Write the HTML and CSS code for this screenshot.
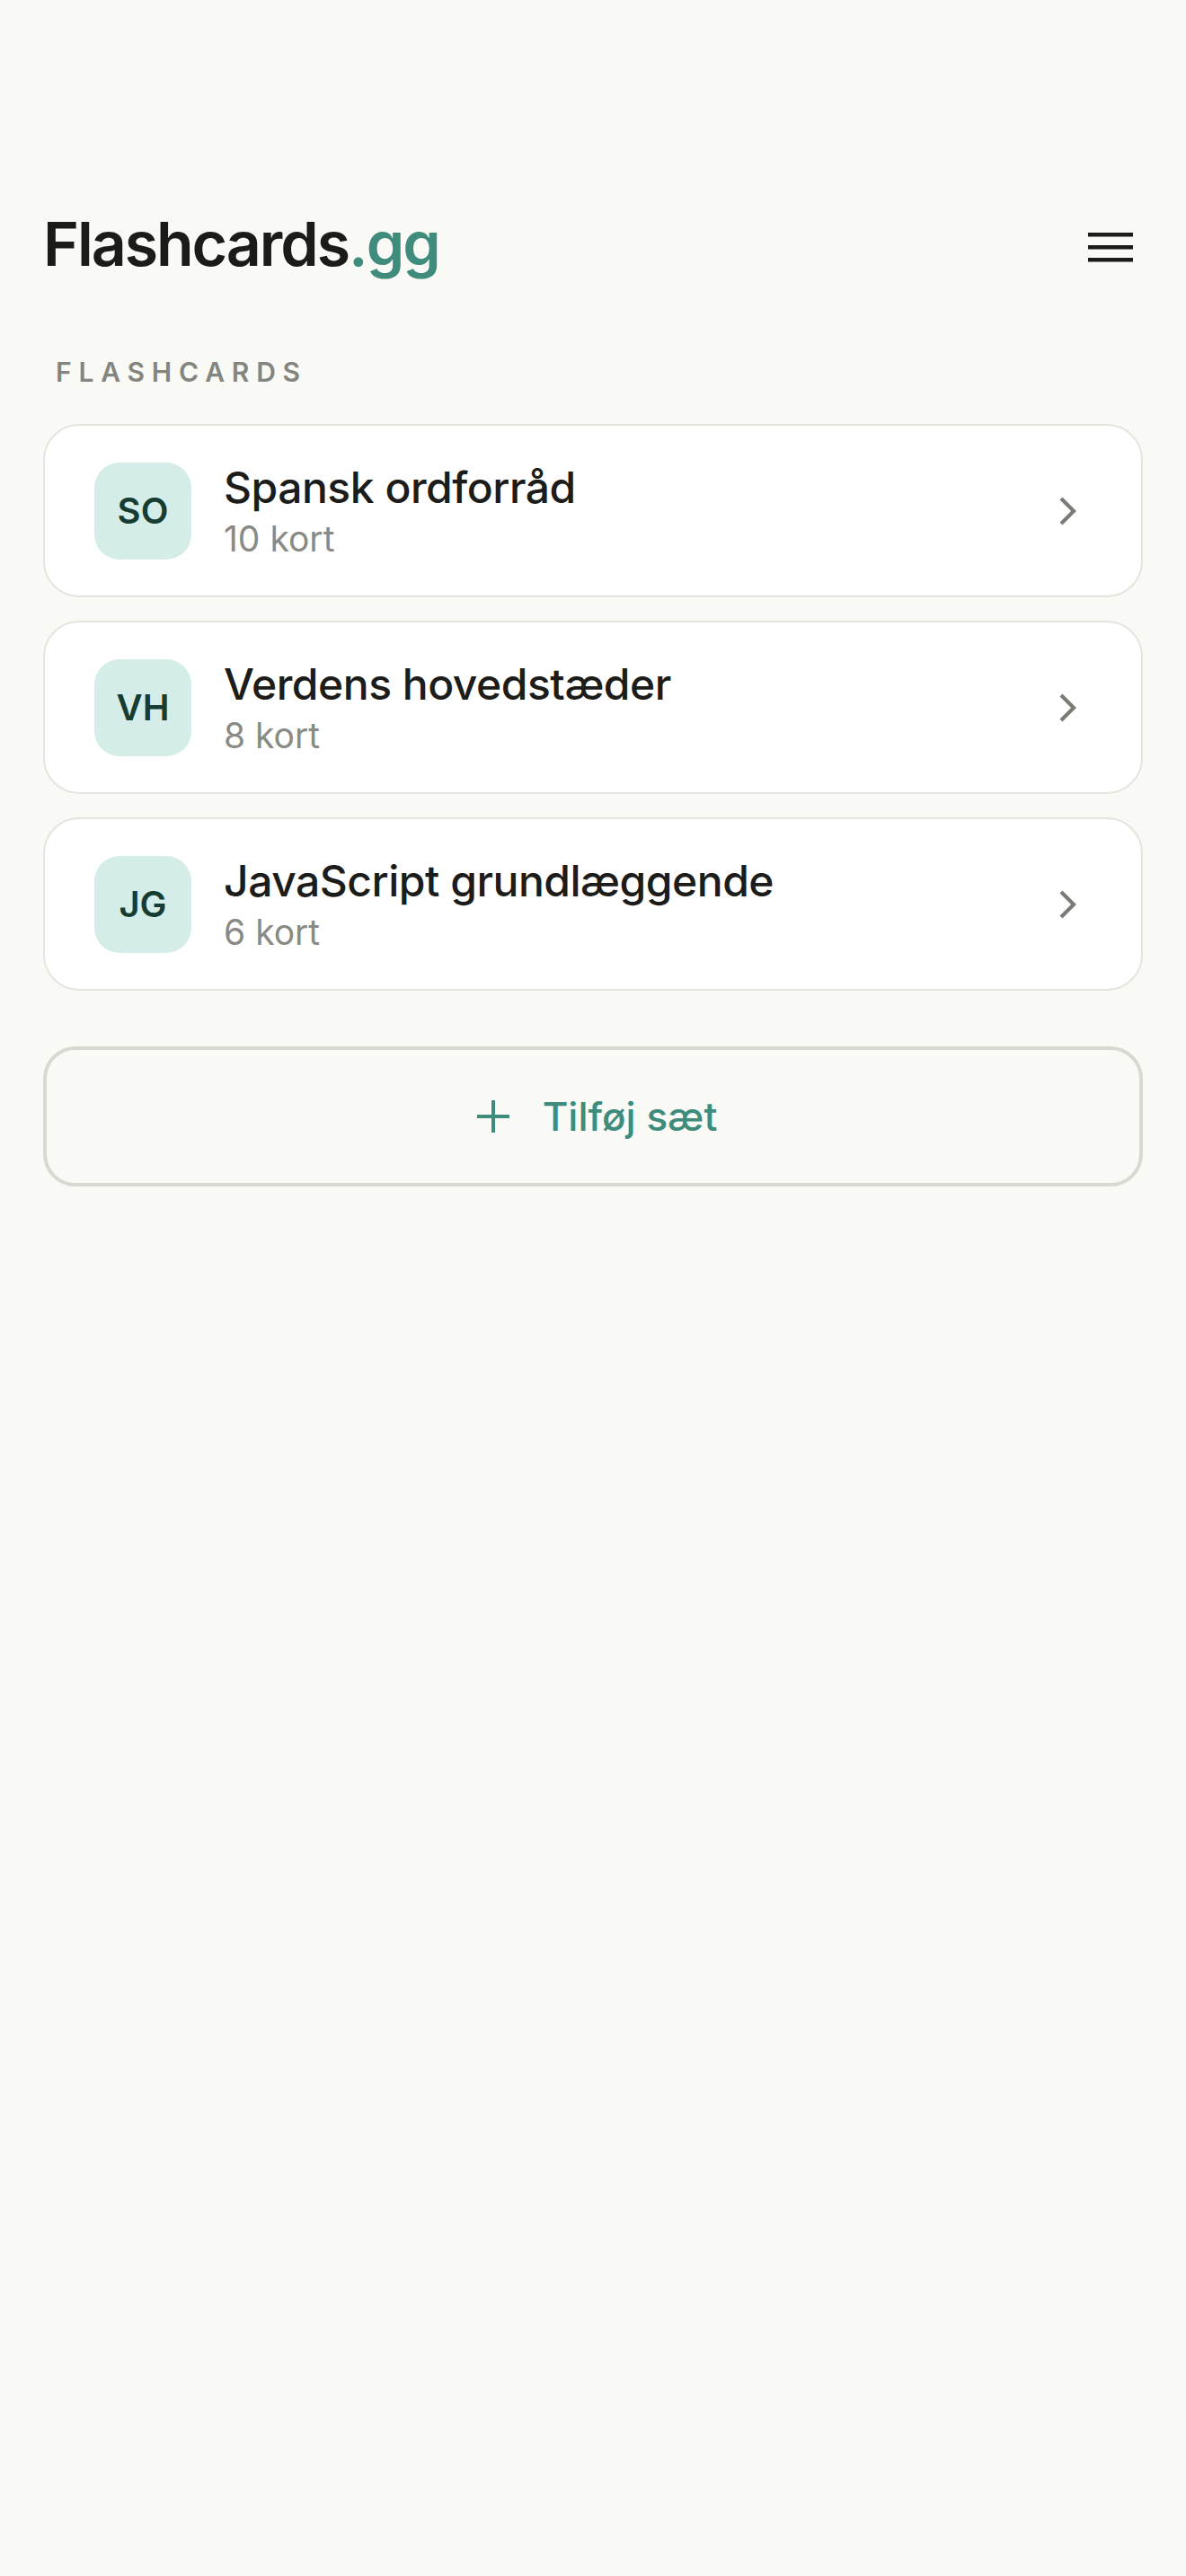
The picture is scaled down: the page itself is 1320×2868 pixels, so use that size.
FILE: index.html
```html
<!DOCTYPE html>
<html lang="da">
<head>
<meta charset="utf-8">
<title>Flashcards.gg</title>
<link rel="stylesheet" href="styles.css">
</head>
<body>
<div class="app">
  <header class="topbar">
    <h1 class="logo">Flashcards<span class="logo-accent">.gg</span></h1>
    <button class="menu-btn" aria-label="Menu">
      <svg width="50" height="34" viewBox="0 0 50 34"><rect x="0" y="1" width="50" height="4.5" fill="#1b1b19"/><rect x="0" y="15" width="50" height="4.5" fill="#1b1b19"/><rect x="0" y="29" width="50" height="4.5" fill="#1b1b19"/></svg>
    </button>
  </header>

  <div class="section-label">FLASHCARDS</div>

  <ul class="deck-list">
    <li class="deck">
      <div class="avatar">SO</div>
      <div class="deck-text">
        <div class="deck-title">Spansk ordforråd</div>
        <div class="deck-count">10 kort</div>
      </div>
      <svg class="chevron" width="22" height="34" viewBox="0 0 22 34"><polyline points="3,3 17,17 3,31" fill="none" stroke="#7b7b76" stroke-width="4.2"/></svg>
    </li>
    <li class="deck">
      <div class="avatar">VH</div>
      <div class="deck-text">
        <div class="deck-title">Verdens hovedstæder</div>
        <div class="deck-count">8 kort</div>
      </div>
      <svg class="chevron" width="22" height="34" viewBox="0 0 22 34"><polyline points="3,3 17,17 3,31" fill="none" stroke="#7b7b76" stroke-width="4.2"/></svg>
    </li>
    <li class="deck">
      <div class="avatar">JG</div>
      <div class="deck-text">
        <div class="deck-title">JavaScript grundlæggende</div>
        <div class="deck-count">6 kort</div>
      </div>
      <svg class="chevron" width="22" height="34" viewBox="0 0 22 34"><polyline points="3,3 17,17 3,31" fill="none" stroke="#7b7b76" stroke-width="4.2"/></svg>
    </li>
  </ul>

  <button class="add-btn">
    <svg width="38" height="38" viewBox="0 0 38 38"><path d="M19 1 V37 M1 19 H37" stroke="#3f8c7c" stroke-width="4" fill="none"/></svg>
    <span>Tilføj sæt</span>
  </button>
</div>
</body>
</html>
```

FILE: styles.css
```css
* { box-sizing: border-box; }

html, body {
  margin: 0;
  padding: 0;
  background: #f9f9f5;
}

body {
  font-family: Inter, "Noto Sans", "Liberation Sans", sans-serif;
  color: #1b1b19;
}

.app {
  padding: 230px 48px 0;
}

.topbar {
  display: flex;
  justify-content: space-between;
  align-items: flex-start;
  height: 82px;
}

.logo {
  margin: 0;
  font-size: 68px;
  font-weight: 600;
  letter-spacing: -0.03em;
  line-height: 82px;
  color: #1b1b19;
}

.logo-accent {
  color: #3f8c7c;
}

.menu-btn {
  width: 72px;
  height: 72px;
  margin-top: 9px;
  padding: 0;
  border: 0;
  background: transparent;
  display: flex;
  align-items: center;
  justify-content: center;
}

.menu-btn svg { display: block; }

.section-label {
  margin-top: 84px;
  padding-left: 14px;
  font-size: 30px;
  line-height: 36px;
  font-weight: 600;
  letter-spacing: 0.26em;
  color: #85857f;
}

.deck-list {
  list-style: none;
  margin: 40px 0 0;
  padding: 0;
  display: flex;
  flex-direction: column;
  gap: 26px;
}

.deck {
  display: flex;
  align-items: center;
  height: 193px;
  padding: 0 70px 0 55px;
  background: #ffffff;
  border: 2px solid #e5e5df;
  border-radius: 40px;
}

.avatar {
  flex: none;
  width: 108px;
  height: 108px;
  border-radius: 28px;
  background: #d4ede9;
  color: #173d33;
  font-size: 40px;
  font-weight: 600;
  display: flex;
  align-items: center;
  justify-content: center;
}

.deck-text {
  flex: 1;
  margin-left: 36px;
  padding-top: 2px;
}

.deck-title {
  font-size: 48px;
  font-weight: 500;
  line-height: 56px;
  letter-spacing: -0.01em;
  color: #1c1c1a;
}

.deck-count {
  margin-top: 5px;
  font-size: 39px;
  line-height: 48px;
  font-weight: 400;
  color: #8a8a85;
}

.chevron {
  flex: none;
  display: block;
}

.add-btn {
  margin-top: 62px;
  width: 100%;
  height: 156px;
  border: 4px solid #d9d9d3;
  border-radius: 36px;
  background: transparent;
  display: flex;
  align-items: center;
  justify-content: center;
  gap: 36px;
  font-family: Inter, "Noto Sans", "Liberation Sans", sans-serif;
  font-size: 44px;
  font-weight: 500;
  color: #3f8c7c;
  padding: 0 0 0 8px;
}

.add-btn svg { display: block; }
```
